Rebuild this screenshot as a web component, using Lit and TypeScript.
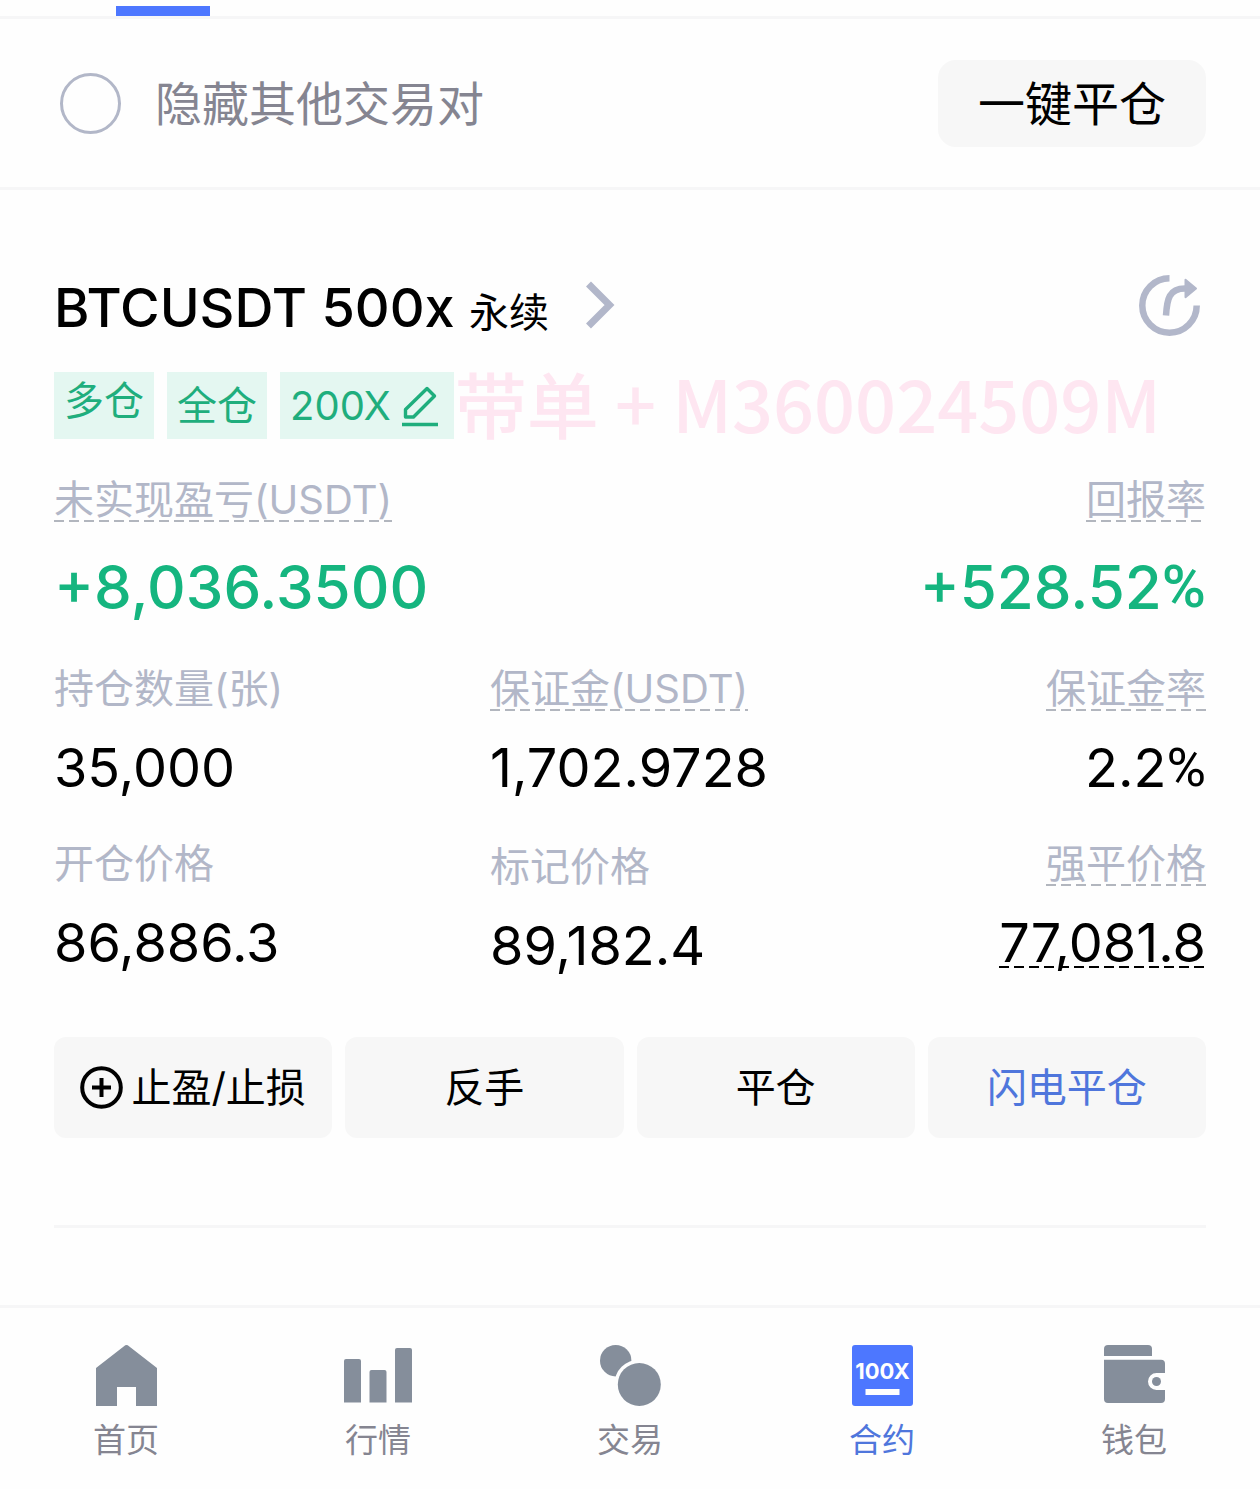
import { LitElement, html, css, svg } from "lit";
import { customElement, property } from "lit/decorators.js";

const homeIcon = svg`<svg class="icon" viewBox="0 0 61 61" width="61" height="61" aria-hidden="true">
  <path fill="currentColor" d="M28 1.2Q30.500 -1 33 1.200L61 23V61H40V42H21V61H0V23Z"/></svg>`;

const marketIcon = svg`<svg class="icon" viewBox="0 0 68 61" width="68" height="61" aria-hidden="true">
  <g fill="currentColor">
    <path d="M0 16Q0 14 2 14H15Q17 14 17 16V57.500H0Z"/>
    <path d="M25.500 27Q25.500 25 27.500 25H40.500Q42.500 25 42.500 27V57.500H25.500Z"/>
    <path d="M51 5Q51 3 53 3H66Q68 3 68 5V57.500H51Z"/>
  </g></svg>`;

const tradeIcon = svg`<svg class="icon" viewBox="0 0 61 61" width="61" height="61" aria-hidden="true">
  <circle cx="15.700" cy="15.700" r="15.700" fill="currentColor"/>
  <circle cx="39.300" cy="39.500" r="25" fill="#fefefe"/>
  <circle cx="39.300" cy="39.500" r="21.500" fill="currentColor"/></svg>`;

const futuresIcon = svg`<svg class="icon" viewBox="0 0 61 61" width="61" height="61" aria-hidden="true">
  <rect width="61" height="61" rx="3" fill="#4d77ff"/>
  <text x="30.500" y="34" text-anchor="middle" font-family="Inter, sans-serif" font-weight="700" font-size="22" fill="#fefefe">100X</text>
  <rect x="13.500" y="44" width="34" height="6" fill="#fefefe"/></svg>`;

const walletIcon = svg`<svg class="icon" viewBox="0 0 61 61" width="61" height="61" aria-hidden="true">
  <path fill="currentColor" d="M0 11V4Q0 0 4 0H44Q48 0 48 4V11Z"/>
  <path fill="currentColor" d="M0 14.700H57Q61 14.700 61 18.700V28H52.500A8.500 8.500 0 0 0 52.500 45H61V54Q61 58 57 58H4Q0 58 0 54Z"/>
  <circle cx="52.500" cy="36.500" r="4.500" fill="currentColor"/></svg>`;

const shareIcon = svg`<svg class="icon" viewBox="0 0 61 61" width="61" height="61" aria-hidden="true">
  <path d="M30.500 3.300A27.200 27.200 0 1 0 57.700 30.500" fill="none" stroke="#b2b7ca" stroke-width="6.500"/>
  <path d="M27 40.500C28 24 30 13.500 46 13.500" fill="none" stroke="#b2b7ca" stroke-width="6.500"/>
  <path d="M46.500 4.800L57 13.500L46.500 22.200Z" fill="#b2b7ca" stroke="#b2b7ca" stroke-width="2" stroke-linejoin="round"/></svg>`;

const chevronIcon = svg`<svg class="icon" viewBox="0 0 30 48" width="30" height="48" aria-hidden="true">
  <path d="M3.500 3L24.500 24L3.500 45" fill="none" stroke="#b2b7ca" stroke-width="7"/></svg>`;

const editIcon = svg`<svg class="icon" viewBox="0 0 38 42" width="38" height="42" aria-hidden="true">
  <g fill="none" stroke="#1fae7d" stroke-width="3.400" stroke-linejoin="round">
    <path d="M4.500 32V24.500L26 3.500L33.500 11L12.500 32Z"/><path d="M1 39.500H37"/></g></svg>`;

const plusIcon = svg`<svg class="icon" viewBox="0 0 43 43" width="43" height="43" aria-hidden="true">
  <g fill="none" stroke="#000" stroke-width="4"><circle cx="21.500" cy="21.500" r="19.300"/><path d="M12 21.500H31M21.500 12V31"/></g></svg>`;

interface Stat {
  label: string;
  value: string;
  unit?: string;
  hint?: boolean;
  valueHint?: boolean;
}

@customElement("position-stat")
class PositionStat extends LitElement {
  @property({ attribute: false }) stat!: Stat;
  @property({ type: Boolean, reflect: true }) end = false;
  @property({ type: Boolean, reflect: true }) gain = false;

  static styles = css`
    :host { display: block; }
    .stat { display: flex; flex-direction: column; align-items: flex-start; gap: 32px; margin: 0; }
    :host([end]) .stat { align-items: flex-end; }
    .label { margin: 0; color: #b2b7c8; font-size: 40px; line-height: 44px; white-space: nowrap; }
    .value { display: flex; margin: 0; color: #000; font-size: 54px; line-height: 50px; white-space: nowrap; }
    .unit { font-family: Roboto, sans-serif; }
    .dashed {
      background: repeating-linear-gradient(90deg, #b2b6be 0 10px, transparent 10px 15px) left bottom / 100% 2px no-repeat;
    }
    .value.dashed {
      background-image: repeating-linear-gradient(90deg, #000 0 10px, transparent 10px 15px);
    }
    :host([gain]) .stat { gap: 40px; }
    :host([gain]) .value { color: #15b57f; font-size: 60px; font-weight: 500; }
  `;

  render() {
    const s = this.stat;
    return html`<dl class="stat">
      <dt class="label ${s.hint ? "dashed" : ""}">${s.label}</dt>
      <dd class="value ${s.valueHint ? "dashed" : ""}">${s.value}${s.unit ? html`<span class="unit">${s.unit}</span>` : ""}</dd>
    </dl>`;
  }
}

@customElement("app-root")
class AppRoot extends LitElement {
  static styles = css`
    :host {
      display: flex; flex-direction: column; min-height: 100vh; background: #fefefe; color: #000;
      font-family: Inter, "Noto Sans CJK SC", sans-serif;
    }
    * { box-sizing: border-box; }
    button { font: inherit; color: inherit; border: 0; background: none; padding: 0; cursor: pointer; }
    a { color: inherit; text-decoration: none; }
    .icon { display: block; flex: none; }
    .tabs { padding: 6px 116px 0; border-bottom: 3px solid #f6f6f7; }
    .tab-mark { width: 94px; height: 10px; background: #4d77ff; }
    .filter {
      display: flex; align-items: center; justify-content: space-between;
      padding: 41px 54px 40px 60px; border-bottom: 3px solid #f6f6f7;
    }
    .hide { display: flex; align-items: center; gap: 34px; font-size: 47px; line-height: 60px; color: #858591; }
    .check {
      appearance: none; width: 61px; height: 61px; margin: 0; border: 3px solid #b2b7c8; border-radius: 50%;
    }
    .check:checked { background: #4d77ff; }
    .close-all { padding: 0 40px; border-radius: 18px; background: #f7f7f7; font-size: 47px; line-height: 87px; }
    .position { padding: 85px 54px 77px; }
    .head { display: flex; align-items: center; justify-content: space-between; height: 60px; padding-right: 6px; }
    .pair { display: flex; align-items: center; gap: 36px; }
    .name { margin: 0; padding-top: 5px; font-size: 54px; font-weight: 500; line-height: 60px; white-space: nowrap; }
    .kind { font-size: 40px; font-weight: 400; line-height: 40px; }
    .tags { display: flex; align-items: center; gap: 13px; margin-top: 37px; color: #1fae7d; }
    .tag {
      display: flex; gap: 10px; height: 67px; padding: 0 10px; background: #e4f7f1;
      font-size: 40px; line-height: 67px; white-space: nowrap;
    }
    .side { line-height: 58px; }
    .lever { align-items: center; padding-right: 15px; }
    .referral {
      align-self: flex-start; height: 60px; margin-left: -12px; color: #fee6f1;
      font-family: "Noto Sans CJK SC", sans-serif; font-size: 72px; font-weight: 500; line-height: 60px; white-space: nowrap;
    }
    .summary { display: flex; justify-content: space-between; margin-top: 39px; }
    .grid { display: grid; grid-template-columns: 436fr 436fr 280fr; margin-top: 55px; }
    .column { display: flex; flex-direction: column; gap: 49px; }
    .column.middle { gap: 52px; }
    .actions { display: grid; grid-template-columns: repeat(4, 1fr); gap: 13px; margin-top: 66px; }
    .action {
      display: flex; align-items: center; justify-content: center; gap: 8px; height: 101px;
      border-radius: 12px; background: #f7f7f7; font-size: 40px; line-height: 44px; white-space: nowrap;
    }
    .flash { color: #4f76dc; }
    .rule { height: 3px; margin: 87px 0 0; border: 0; background: #f6f6f7; }
    .nav { display: grid; grid-template-columns: repeat(5, 1fr); padding-top: 37px; border-top: 3px solid #f6f6f7; }
    .nav-item { display: flex; flex-direction: column; align-items: center; gap: 14px; color: #858e9b; }
    .nav-text { color: #858591; font-size: 33px; line-height: 40px; }
    .active .nav-text { color: #4f76dc; }
  `;

  private columns: { name: string; stats: Stat[] }[] = [
    { name: "left", stats: [
      { label: "持仓数量(张)", value: "35,000" },
      { label: "开仓价格", value: "86,886.3" },
    ] },
    { name: "middle", stats: [
      { label: "保证金(USDT)", value: "1,702.9728", hint: true },
      { label: "标记价格", value: "89,182.4" },
    ] },
    { name: "right", stats: [
      { label: "保证金率", value: "2.2", unit: "%", hint: true },
      { label: "强平价格", value: "77,081.8", hint: true, valueHint: true },
    ] },
  ];

  private nav = [
    { text: "首页", icon: homeIcon },
    { text: "行情", icon: marketIcon },
    { text: "交易", icon: tradeIcon },
    { text: "合约", icon: futuresIcon, active: true },
    { text: "钱包", icon: walletIcon },
  ];

  render() {
    return html`
      <div class="tabs"><div class="tab-mark"></div></div>
      <div class="filter">
        <label class="hide"><input class="check" type="checkbox" />隐藏其他交易对</label>
        <button class="close-all">一键平仓</button>
      </div>
      <main class="position">
        <div class="head">
          <a class="pair" href="#pair">
            <h1 class="name">BTCUSDT 500x <span class="kind">永续</span></h1>
            ${chevronIcon}
          </a>
          <button aria-label="分享">${shareIcon}</button>
        </div>
        <div class="tags">
          <span class="tag side">多仓</span>
          <span class="tag">全仓</span>
          <button class="tag lever">200X${editIcon}</button>
          <span class="referral">带单 + M360024509M</span>
        </div>
        <div class="summary">
          <position-stat gain .stat=${{ label: "未实现盈亏(USDT)", value: "+8,036.3500", hint: true }}></position-stat>
          <position-stat gain end .stat=${{ label: "回报率", value: "+528.52", unit: "%", hint: true }}></position-stat>
        </div>
        <div class="grid">
          ${this.columns.map((c) => html`<div class="column ${c.name}">
            ${c.stats.map((s) => html`<position-stat ?end=${c.name === "right"} .stat=${s}></position-stat>`)}
          </div>`)}
        </div>
        <div class="actions">
          <button class="action">${plusIcon}止盈/止损</button>
          <button class="action">反手</button>
          <button class="action">平仓</button>
          <button class="action flash">闪电平仓</button>
        </div>
        <hr class="rule" />
      </main>
      <nav class="nav">
        ${this.nav.map((n) => html`<a class="nav-item ${n.active ? "active" : ""}" href="#${n.text}">
          ${n.icon}<span class="nav-text">${n.text}</span></a>`)}
      </nav>
    `;
  }
}
